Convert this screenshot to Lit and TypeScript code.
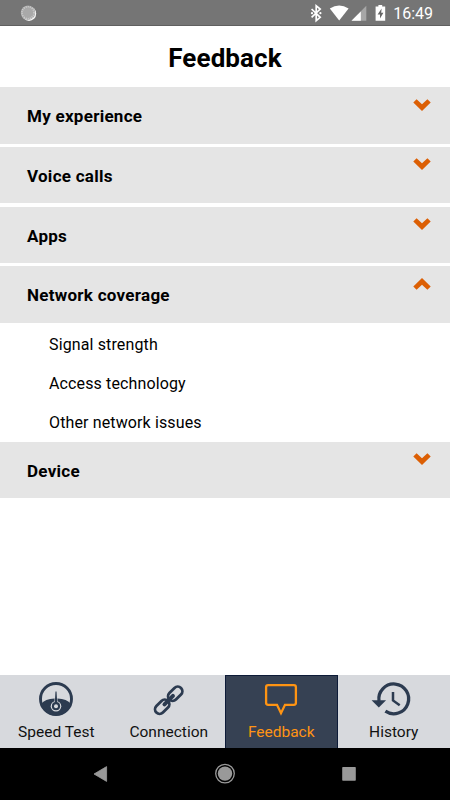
import { LitElement, html, svg, css } from "lit";
import { customElement, state } from "lit/decorators.js";
import { classMap } from "lit/directives/class-map.js";

interface Section {
  title: string;
  items: string[];
}

const SECTIONS: Section[] = [
  { title: "My experience", items: [] },
  { title: "Voice calls", items: [] },
  { title: "Apps", items: [] },
  {
    title: "Network coverage",
    items: ["Signal strength", "Access technology", "Other network issues"],
  },
  { title: "Device", items: [] },
];

const TABS = [
  {
    label: "Speed Test",
    icon: svg`
      <circle cx="20" cy="19" r="15.5" fill="none" stroke="currentColor" stroke-width="2.9"/>
      <path d="M5 24Q9 19 18.6 18.6H21.4Q31 19 35 24A15.5 15.5 0 0 1 5 24Z" fill="currentColor"/>
      <circle cx="20" cy="26.2" r="5.3" class="cut"/>
      <path d="M18.3 23L19 12H21L21.7 23Z" class="cut"/>
      <circle cx="20" cy="26.2" r="4.1" fill="currentColor"/>
      <path d="M18.7 24L19.5 11.4H20.5L21.3 24Z" fill="currentColor"/>
      <circle cx="20" cy="26.2" r="2" class="cut"/>`,
  },
  {
    label: "Connection",
    icon: svg`
      <g transform="translate(-0.3 0.2) rotate(-45 20 20)" fill="none" stroke="currentColor" stroke-width="2.8" stroke-linecap="round">
        <rect x="2.6" y="15.4" width="16.4" height="9.2" rx="4.6"/>
        <rect x="21" y="15.4" width="16.4" height="9.2" rx="4.6"/>
        <path d="M14 20H26" stroke-width="4"/>
      </g>`,
  },
  {
    label: "Feedback",
    icon: svg`<path d="M7.1 5.2H32.9Q34.9 5.2 34.9 7.2V22.8Q34.9 24.8 32.9 24.8H24L20 33.2L16 24.8H7.1Q5.1 24.8 5.1 22.8V7.2Q5.1 5.2 7.1 5.2Z" fill="none" stroke="currentColor" stroke-width="2.3"/>`,
  },
  {
    label: "History",
    icon: svg`
      <path d="M5 21A14.9 14.9 0 1 1 11.4 31.2" fill="none" stroke="currentColor" stroke-width="3.3"/>
      <path d="M-2.4 20.2H12.1L4.8 27.6Z" fill="currentColor"/>
      <path d="M19 12V20.4L25.7 25.2" fill="none" stroke="currentColor" stroke-width="2.5"/>`,
  },
];

@customElement("app-root")
export class AppRoot extends LitElement {
  @state() private open = 3;
  @state() private tab = 2;

  static styles = css`
    :host {
      display: flex;
      flex-direction: column;
      width: 100%;
      height: 100vh;
      overflow: hidden;
      background: #fff;
      color: #000;
      font-family: Roboto, "Noto Sans", sans-serif;
    }
    svg { display: block; overflow: visible; }
    .status {
      flex: none;
      box-sizing: border-box;
      height: 26px;
      background: #757575;
      border-bottom: 1px solid #606060;
      display: flex;
      align-items: center;
      justify-content: space-between;
      padding: 0 17px 0 20px;
      color: #fff;
    }
    .right { display: flex; align-items: center; }
    .clock { font-size: 16px; line-height: 26px; padding-top: 2px; margin-left: 7px; }
    .title {
      flex: none;
      margin: 0;
      height: 61.4px;
      line-height: 64px;
      text-align: center;
      font-size: 26px;
      font-weight: 700;
      letter-spacing: 0.1px;
    }
    .list { flex: 1; min-height: 0; }
    .head {
      height: 56.3px;
      margin-bottom: 3.35px;
      background: #e5e5e5;
      display: flex;
      justify-content: space-between;
      padding: 0 19px 0 27px;
      font-size: 17px;
      font-weight: 700;
      letter-spacing: 0.27px;
      line-height: 58px;
    }
    .head.open { margin-bottom: 0; }
    .arrow { width: 18px; height: 12px; margin-top: 11.2px; }
    .up { transform: rotate(180deg); }
    .items { box-sizing: border-box; height: 119.4px; padding-top: 3px; }
    .item {
      height: 39px;
      line-height: 38.4px;
      padding-left: 49px;
      font-size: 16px;
      letter-spacing: 0.13px;
    }
    .tabs {
      flex: none;
      height: 73.5px;
      display: grid;
      grid-template-columns: repeat(4, 1fr);
      background: #d7d9dd;
    }
    .tab {
      box-sizing: border-box;
      display: flex;
      flex-direction: column;
      align-items: center;
      padding-top: 5.5px;
      color: #2c3b50;
      --tab-bg: #d7d9dd;
    }
    .tab.active {
      background: #364153;
      color: #ff9413;
      box-shadow: inset 1px 1px 0 #0d1b38, inset -1px 0 0 #0d1b38;
      --tab-bg: #364153;
    }
    .cut { fill: var(--tab-bg); }
    .label { font-size: 15.5px; line-height: 20px; margin-top: 1.8px; color: #111; }
    .active .label { color: inherit; }
    .nav {
      flex: none;
      height: 52px;
      background: #000;
    }
  `;

  private renderStatus() {
    return html`<div class="status">
      <svg width="18" height="18" viewBox="0 0 18 18">
        <circle cx="9" cy="9.7" r="7.2" fill="#f5f5f5"/>
        <circle cx="8" cy="8.7" r="7.2" fill="#a9a9a9"/>
        <circle cx="8" cy="8.7" r="6" fill="none" stroke="#cfcfcf" stroke-width="1.6" stroke-dasharray="1 1.1"/>
      </svg>
      <div class="right">
        <svg width="78" height="26" viewBox="308 0 78 26">
          <path d="M311.6 9L320.2 17.3L316.2 20.6V5.8L320.2 9L311.6 17.3" fill="none" stroke="#fff" stroke-width="1.7"/>
          <circle cx="312" cy="13.2" r="1.1" fill="#fff"/>
          <circle cx="320.4" cy="13.2" r="1.1" fill="#fff"/>
          <path d="M329.8 8.5Q339.2 2.5 348.6 8.5L339.2 20.6Z" fill="#fff"/>
          <path d="M366.3 5.8V20.8H351.5Z" fill="#a6a6a6"/>
          <path d="M360.8 11.4V20.8H351.5Z" fill="#fff"/>
          <path d="M378.4 5H382.2V6.6H385.2V20.8H375.6V6.6H378.4Z" fill="#fff"/>
          <path d="M381.6 8.6L377.6 14.4H380V18.6L383.4 12.8H381.2Z" fill="#666"/>
        </svg>
        <span class="clock">16:49</span>
      </div>
    </div>`;
  }

  private renderSection(s: Section, i: number) {
    const open = i === this.open;
    return html`
      <div class=${classMap({ head: true, open })} @click=${() => (this.open = open ? -1 : i)}>
        <span>${s.title}</span>
        <svg class=${classMap({ arrow: true, up: open })} viewBox="0 0 18 12">
          <path d="M0.3 3.6L3.6 0.3L9 5.3L14.4 0.3L17.7 3.6L9 12Z" fill="#dc5f04"/>
        </svg>
      </div>
      ${open
        ? html`<div class="items">${s.items.map((t) => html`<div class="item">${t}</div>`)}</div>`
        : null}
    `;
  }

  render() {
    return html`
      ${this.renderStatus()}
      <h1 class="title">Feedback</h1>
      <div class="list">${SECTIONS.map((s, i) => this.renderSection(s, i))}</div>
      <div class="tabs">
        ${TABS.map(
          (t, i) => html`<div
            class=${classMap({ tab: true, active: i === this.tab })}
            @click=${() => (this.tab = i)}
          >
            <svg width="40" height="40" viewBox="0 0 40 40">${t.icon}</svg>
            <span class="label">${t.label}</span>
          </div>`
        )}
      </div>
      <div class="nav">
        <svg width="450" height="52" viewBox="0 0 450 52">
          <path d="M94 26L106.6 18.6V33.4Z" fill="#999" stroke="#999" stroke-width="0.8" stroke-linejoin="round"/>
          <circle cx="225" cy="25.6" r="9.3" fill="none" stroke="#999" stroke-width="1.3"/>
          <circle cx="225" cy="25.6" r="7.2" fill="#999"/>
          <rect x="342.2" y="19" width="13.6" height="13.8" rx="0.8" fill="#999"/>
        </svg>
      </div>
    `;
  }
}
